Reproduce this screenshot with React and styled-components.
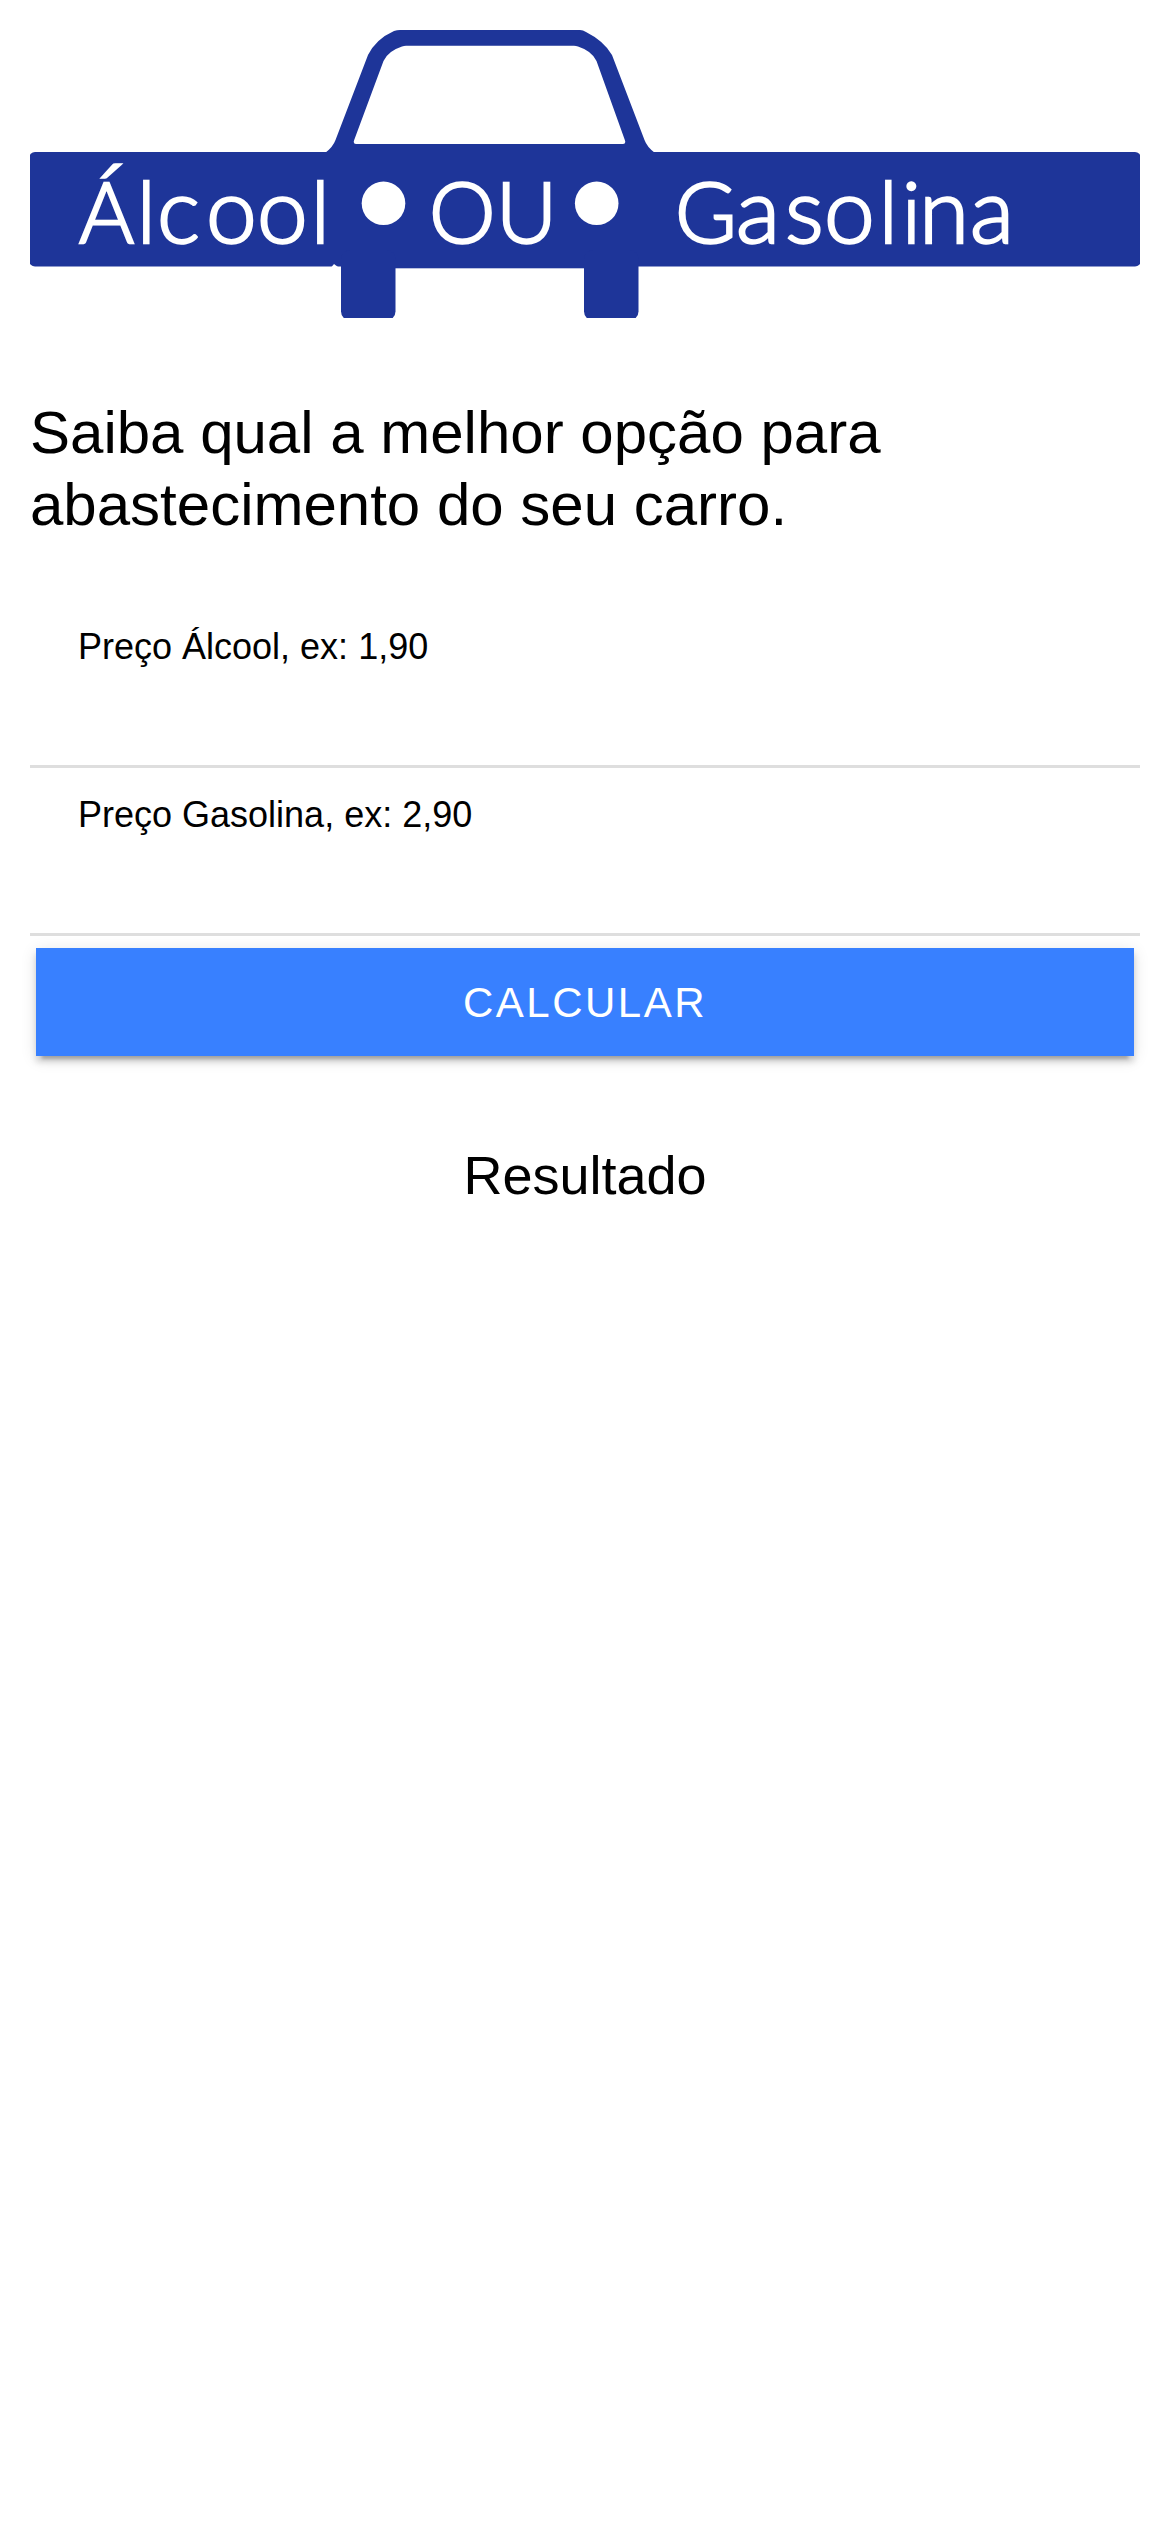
import React from "react";
import styled, { createGlobalStyle } from "styled-components";

const GlobalStyle = createGlobalStyle`
  * { box-sizing: border-box; }
  body {
    margin: 0;
    background: #fff;
    color: #000;
    font-family: "Liberation Sans", Arial, sans-serif;
  }
`;

const Page = styled.main`
  display: flex;
  flex-direction: column;
  min-height: 2532px;
  padding: 30px;
`;

const Logo = styled.svg`
  display: block;
  width: 1110px;
  height: 288px;
`;

const LogoText = styled.text`
  font-family: Lato, sans-serif;
  font-size: 84px;
  font-weight: 300;
  fill: #fff;
  stroke: #fff;
  stroke-width: 2.4px;
`;

const Round = styled.tspan`
  font-size: 91px;
`;

const Title = styled.h1`
  margin: 79px 0 59px;
  font-size: 60px;
  font-weight: 400;
  line-height: 72px;
`;

const Item = styled.div`
  display: flex;
  flex-direction: column;
  height: 168px;
  padding: 26px 48px 0;
  border-bottom: 3px solid #dedede;
`;

const Label = styled.label`
  font-size: 36px;
  line-height: 42px;
`;

const Input = styled.input`
  flex: 1;
  min-height: 0;
  width: 100%;
  padding: 0;
  border: 0;
  outline: 0;
  background: transparent;
  font: 48px "Liberation Sans", Arial, sans-serif;
`;

const Button = styled.button`
  height: 108px;
  margin: 12px 6px 0;
  padding: 2px 0 0;
  border: 0;
  background: #3880ff;
  color: #fff;
  font: 500 42px "Liberation Sans", Arial, sans-serif;
  letter-spacing: 0.06em;
  text-transform: uppercase;
  box-shadow:
    0 9px 3px -6px rgba(0, 0, 0, 0.2),
    0 6px 6px 0 rgba(0, 0, 0, 0.14),
    0 3px 15px 0 rgba(0, 0, 0, 0.12);
`;

const Result = styled.h2`
  margin: 87px 0 0;
  font-size: 54px;
  font-weight: 400;
  line-height: 65px;
  text-align: center;
`;

const CarLogo = () => (
  <Logo viewBox="30 30 1110 288" role="img" aria-label="Álcool ou Gasolina">
    <g fill="#1e3599">
      <rect x="29" y="152" width="1112" height="114.5" rx="6" />
      <path
        fillRule="evenodd"
        d="M325 153Q333 147 335.5 140L368 55Q376 39 394 31Q397 30 400 30H580Q583 30 586 32Q604 41 612 55L644.5 140Q647 147 655 153ZM354 140.5Q353 144 356 144H623Q626 144 625 140.5L596.5 61Q592 51 578 46.5Q576 45.7 574 45.7H406Q404 45.7 402 46.5Q388 51 383.5 61Z"
      />
      <rect x="341" y="250" width="54.5" height="70.5" rx="9" />
      <rect x="584" y="250" width="54.5" height="70.5" rx="9" />
      <rect x="390" y="260" width="200" height="8.3" />
    </g>
    <path d="M331.5 267L334 264L338 267Z" fill="#fff" />
    <circle cx="383.5" cy="203.3" r="21.8" fill="#fff" />
    <circle cx="596.7" cy="203.3" r="21.8" fill="#fff" />
    <LogoText y="242.5">
      <tspan x="79 137">Ál</tspan>
      <Round x="157 206 257">coo</Round>
      <tspan x="311">l</tspan>
    </LogoText>
    <LogoText x="429 496" y="242.5">OU</LogoText>
    <LogoText y="242.5">
      <tspan x="675">G</tspan>
      <Round x="736 785 824">aso</Round>
      <tspan x="879 902">li</tspan>
      <Round x="919 970">na</Round>
    </LogoText>
  </Logo>
);

const Field = ({ id, label }) => (
  <Item>
    <Label htmlFor={id}>{label}</Label>
    <Input id={id} inputMode="decimal" />
  </Item>
);

export default function App() {
  return (
    <>
      <GlobalStyle />
      <Page>
        <CarLogo />
        <Title>Saiba qual a melhor opção para abastecimento do seu carro.</Title>
        <Field id="alcool" label="Preço Álcool, ex: 1,90" />
        <Field id="gasolina" label="Preço Gasolina, ex: 2,90" />
        <Button type="button">Calcular</Button>
        <Result>Resultado</Result>
      </Page>
    </>
  );
}
